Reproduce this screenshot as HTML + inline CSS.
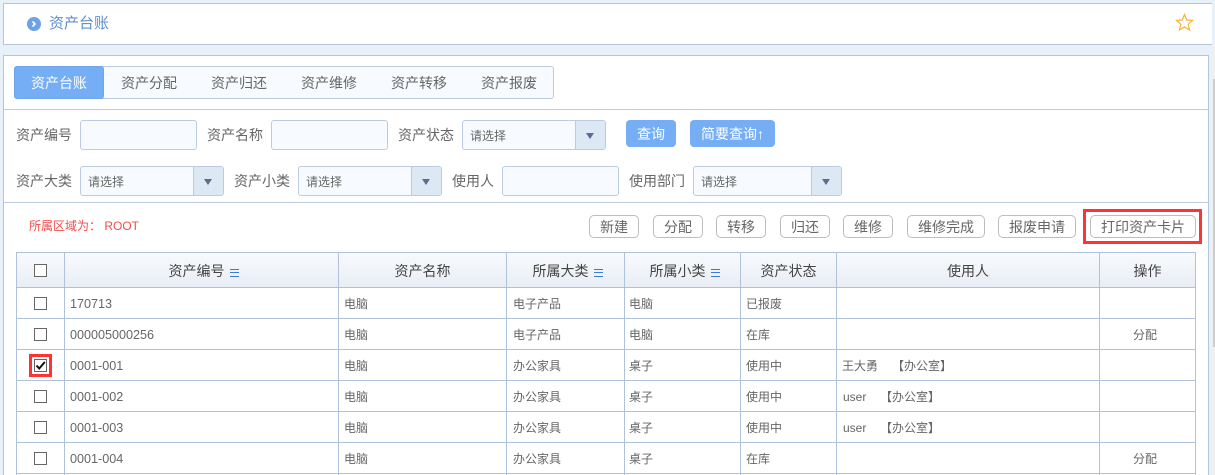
<!DOCTYPE html>
<html lang="zh"><head><meta charset="utf-8"><title>资产台账</title>
<style>
*{box-sizing:border-box}
html,body{margin:0;padding:0;width:1215px;height:475px;overflow:hidden}
body{background:#e8f0fa;font-family:"Liberation Sans","Noto Sans CJK SC",sans-serif;color:#666}
#w{position:relative;width:1215px;height:475px;overflow:hidden}
.a,.l,.i,.s,.b,.t,.c,.th,.td{position:absolute}
.l{font-size:14px;line-height:22px;color:#666;white-space:nowrap}
.i{height:30px;width:117px;background:#f7fbff;border:1px solid #bccbdf;border-radius:3px;top:120px}
.s{height:30px;background:#f7fbff;border:1px solid #bccbdf;border-radius:3px;font-size:12px;line-height:31px;padding-left:7px;color:#666}
.s i{position:absolute;right:0;top:0;width:30px;height:28px;background:#dde8f5;border-left:1px solid #bccbdf;border-radius:0 2px 2px 0}
.s i:after{content:"";position:absolute;left:10px;top:12px;border-left:4.5px solid transparent;border-right:4.5px solid transparent;border-top:6px solid #5a6d8c}
.b{top:215px;height:23px;background:#fff;border:1px solid #bdbdbd;border-radius:5px;font-size:14px;line-height:23px;text-align:center;color:#666;white-space:nowrap}
.t{top:66px;height:33px;font-size:14px;line-height:35px;text-align:center;color:#666;white-space:nowrap}
.c{left:34px;width:13px;height:13px;border:1px solid #666;background:#fff}
.th{top:252px;height:36px;background:linear-gradient(#f8fafc,#e9eef5);border:1px solid #b0c2db;border-right:0;font-size:14px;line-height:36px;text-align:center;color:#444;white-space:nowrap}
.p{padding-left:4px}
.m{display:inline-block;width:9px;height:8px;margin-left:5px;vertical-align:-1px;border-top:1px solid #3a7bd5;border-bottom:1px solid #3a7bd5;position:relative}
.m:after{content:"";position:absolute;left:0;right:0;top:2px;height:1px;background:#3a7bd5}
.rl{position:absolute;background:#b0c2db}
.td{font-size:12px;line-height:22px;color:#666;white-space:nowrap}
</style></head><body><div id="w">

<!-- header panel -->
<div class="a" style="left:3px;top:3px;width:1209px;height:42px;background:#fff;border:1px solid #b4c6dd;border-right:0"></div>
<svg class="a" style="left:27px;top:17px" width="14" height="14" viewBox="0 0 14 14"><circle cx="7" cy="7" r="7" fill="#6ba3e3"/><path d="M5.5 4.5 8 7 5.5 9.5" fill="none" stroke="#fff" stroke-width="1.6"/></svg>
<div class="l" style="left:49px;top:13px;font-size:15px;color:#5f8fce">资产台账</div>
<svg class="a" style="left:1175px;top:13px" width="19" height="19" viewBox="0 0 19 19"><path d="M9.5 1.5 11.8 7 17.5 7.4 13.2 11.2 14.6 17 9.5 14 4.4 17 5.8 11.2 1.5 7.4 7.2 7Z" fill="none" stroke="#fbb03b" stroke-width="1.2"/></svg>

<!-- scrollbar -->
<div class="a" style="left:1212px;top:44px;width:3px;height:431px;background:#f0f0f0"></div>
<div class="a" style="left:1213px;top:79px;width:2px;height:268px;background:#cdcdcd"></div>

<!-- main panel -->
<div class="a" style="left:3px;top:55px;width:1206px;height:430px;background:#fff;border:1px solid #b4c6dd"></div>

<!-- tabs -->
<div class="a" style="left:14px;top:66px;width:540px;height:33px;background:#f7fbff;border:1px solid #bccbdf;border-radius:3px"></div>
<div class="t" style="left:14px;width:90px;background:#75aef5;border:1px solid #6fa6ea;border-radius:3px;color:#fff;line-height:33px">资产台账</div>
<div class="t" style="left:104px;width:90px">资产分配</div>
<div class="t" style="left:194px;width:90px">资产归还</div>
<div class="t" style="left:284px;width:90px">资产维修</div>
<div class="t" style="left:374px;width:90px">资产转移</div>
<div class="t" style="left:464px;width:90px">资产报废</div>
<div class="a" style="left:4px;top:109px;width:1204px;height:1px;background:#bccbdf"></div>

<!-- filters row 1 -->
<div class="l" style="left:16px;top:124px">资产编号</div>
<div class="i" style="left:80px"></div>
<div class="l" style="left:207px;top:124px">资产名称</div>
<div class="i" style="left:271px"></div>
<div class="l" style="left:398px;top:124px">资产状态</div>
<div class="s" style="left:462px;top:120px;width:144px">请选择<i></i></div>
<div class="a" style="left:626px;top:120px;width:50px;height:27px;background:#75aef5;border-radius:4px;color:#fff;font-size:14px;line-height:28px;text-align:center">查询</div>
<div class="a" style="left:690px;top:120px;width:85px;height:27px;background:#75aef5;border-radius:4px;color:#fff;font-size:14px;line-height:28px;text-align:center;white-space:nowrap">简要查询↑</div>

<!-- filters row 2 -->
<div class="l" style="left:16px;top:170px">资产大类</div>
<div class="s" style="left:80px;top:166px;width:144px">请选择<i></i></div>
<div class="l" style="left:234px;top:170px">资产小类</div>
<div class="s" style="left:298px;top:166px;width:144px">请选择<i></i></div>
<div class="l" style="left:452px;top:170px">使用人</div>
<div class="i" style="left:502px;top:166px"></div>
<div class="l" style="left:629px;top:170px">使用部门</div>
<div class="s" style="left:693px;top:166px;width:149px">请选择<i></i></div>
<div class="a" style="left:4px;top:202px;width:1204px;height:1px;background:#bccbdf"></div>

<!-- toolbar -->
<div class="l" style="left:29px;top:215px;font-size:12px;color:#f44c4c;white-space:pre">所属区域为： ROOT</div>
<div class="b" style="left:589px;width:50px">新建</div>
<div class="b" style="left:653px;width:50px">分配</div>
<div class="b" style="left:716px;width:50px">转移</div>
<div class="b" style="left:780px;width:50px">归还</div>
<div class="b" style="left:843px;width:50px">维修</div>
<div class="b" style="left:907px;width:78px">维修完成</div>
<div class="b" style="left:998px;width:78px">报废申请</div>
<div class="b" style="left:1090px;width:106px">打印资产卡片</div>
<div class="a" style="left:1083px;top:209px;width:119px;height:35px;border:3px solid #f33;z-index:5"></div>

<!-- table head -->
<div class="th" style="left:16px;width:48px"></div>
<div class="th p" style="left:64px;width:274px">资产编号<span class="m"></span></div>
<div class="th" style="left:338px;width:168px">资产名称</div>
<div class="th p" style="left:506px;width:118px">所属大类<span class="m"></span></div>
<div class="th p" style="left:624px;width:116px">所属小类<span class="m"></span></div>
<div class="th" style="left:740px;width:96px">资产状态</div>
<div class="th" style="left:836px;width:263px">使用人</div>
<div class="th" style="left:1099px;width:97px;border-right:1px solid #b0c2db">操作</div>

<!-- grid lines -->
<div class="rl" style="left:16px;top:287px;width:1px;height:188px"></div>
<div class="rl" style="left:64px;top:287px;width:1px;height:188px"></div>
<div class="rl" style="left:338px;top:287px;width:1px;height:188px"></div>
<div class="rl" style="left:506px;top:287px;width:1px;height:188px"></div>
<div class="rl" style="left:624px;top:287px;width:1px;height:188px"></div>
<div class="rl" style="left:740px;top:287px;width:1px;height:188px"></div>
<div class="rl" style="left:836px;top:287px;width:1px;height:188px"></div>
<div class="rl" style="left:1099px;top:287px;width:1px;height:188px"></div>
<div class="rl" style="left:1195px;top:287px;width:1px;height:188px"></div>
<div class="rl" style="left:16px;top:318px;width:1180px;height:1px"></div>
<div class="rl" style="left:16px;top:349px;width:1180px;height:1px"></div>
<div class="rl" style="left:16px;top:380px;width:1180px;height:1px"></div>
<div class="rl" style="left:16px;top:411px;width:1180px;height:1px"></div>
<div class="rl" style="left:16px;top:442px;width:1180px;height:1px"></div>
<div class="rl" style="left:16px;top:473px;width:1180px;height:1px"></div>

<!-- checkboxes -->
<div class="c" style="top:264px"></div>
<div class="c" style="top:297px"></div>
<div class="c" style="top:328px"></div>
<div class="c" style="top:359px"></div>
<div class="c" style="top:390px"></div>
<div class="c" style="top:421px"></div>
<div class="c" style="top:452px"></div>
<svg class="a" style="left:34px;top:359px" width="13" height="13" viewBox="0 0 13 13"><path d="M2.5 6.5 5.2 9.5 10.8 3" fill="none" stroke="#111" stroke-width="2"/></svg>
<div class="a" style="left:29px;top:354px;width:23px;height:23px;border:3px solid #f33"></div>

<!-- row 1 -->
<div class="td" style="left:70px;top:293px;font-size:12.6px">170713</div>
<div class="td" style="left:344px;top:293px">电脑</div>
<div class="td" style="left:513px;top:293px">电子产品</div>
<div class="td" style="left:629px;top:293px">电脑</div>
<div class="td" style="left:746px;top:293px">已报废</div>
<!-- row 2 -->
<div class="td" style="left:70px;top:324px;font-size:12.6px">000005000256</div>
<div class="td" style="left:344px;top:324px">电脑</div>
<div class="td" style="left:513px;top:324px">电子产品</div>
<div class="td" style="left:629px;top:324px">电脑</div>
<div class="td" style="left:746px;top:324px">在库</div>
<div class="td" style="left:1133px;top:324px">分配</div>
<!-- row 3 -->
<div class="td" style="left:70px;top:355px;font-size:12.6px">0001-001</div>
<div class="td" style="left:344px;top:355px">电脑</div>
<div class="td" style="left:513px;top:355px">办公家具</div>
<div class="td" style="left:629px;top:355px">桌子</div>
<div class="td" style="left:746px;top:355px">使用中</div>
<div class="td" style="left:842px;top:355px">王大勇</div>
<div class="td" style="left:892px;top:355px">【办公室】</div>
<!-- row 4 -->
<div class="td" style="left:70px;top:386px;font-size:12.6px">0001-002</div>
<div class="td" style="left:344px;top:386px">电脑</div>
<div class="td" style="left:513px;top:386px">办公家具</div>
<div class="td" style="left:629px;top:386px">桌子</div>
<div class="td" style="left:746px;top:386px">使用中</div>
<div class="td" style="left:843px;top:386px">user</div>
<div class="td" style="left:880px;top:386px">【办公室】</div>
<!-- row 5 -->
<div class="td" style="left:70px;top:417px;font-size:12.6px">0001-003</div>
<div class="td" style="left:344px;top:417px">电脑</div>
<div class="td" style="left:513px;top:417px">办公家具</div>
<div class="td" style="left:629px;top:417px">桌子</div>
<div class="td" style="left:746px;top:417px">使用中</div>
<div class="td" style="left:843px;top:417px">user</div>
<div class="td" style="left:880px;top:417px">【办公室】</div>
<!-- row 6 -->
<div class="td" style="left:70px;top:448px;font-size:12.6px">0001-004</div>
<div class="td" style="left:344px;top:448px">电脑</div>
<div class="td" style="left:513px;top:448px">办公家具</div>
<div class="td" style="left:629px;top:448px">桌子</div>
<div class="td" style="left:746px;top:448px">在库</div>
<div class="td" style="left:1133px;top:448px">分配</div>

</div></body></html>
